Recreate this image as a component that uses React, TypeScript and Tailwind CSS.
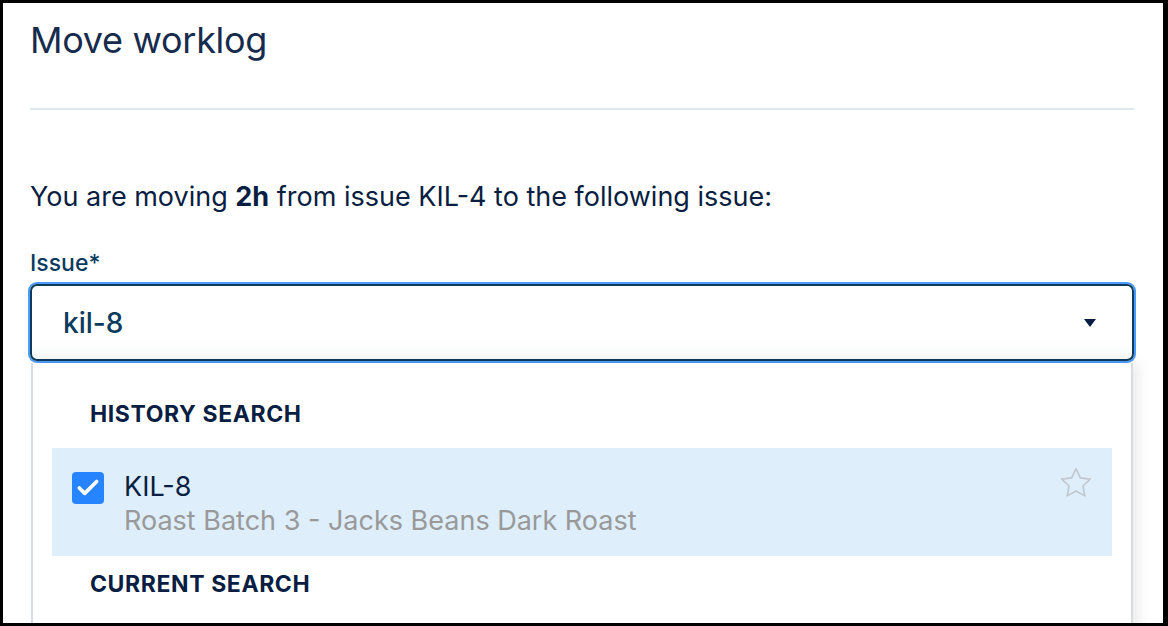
import { Check } from "lucide-react";

function StarIcon() {
  return (
    <svg width="38" height="36" viewBox="0 0 24 24" fill="none" stroke="#c1c7d0" strokeWidth="1.1" strokeLinejoin="round">
      <path d="M12 2.5l2.9 6.1 6.6.8-4.9 4.6 1.3 6.6L12 17.3l-5.9 3.3 1.3-6.6-4.9-4.6 6.6-.8z" />
    </svg>
  );
}

export default function App() {
  return (
    <div
      className="h-[626px] w-[1168px] overflow-hidden bg-black pt-[3px] pb-[3px] pl-[3px] pr-[5px]"
      style={{ fontFamily: "Inter, 'Noto Sans', sans-serif" }}
    >
      <div className="h-full w-full overflow-hidden bg-white pl-[27px] pr-[29px]">
        <h1 className="pt-[15px] text-[36px] leading-[44px] font-normal tracking-[-0.3px] text-[#172b4d]">
          Move worklog
        </h1>
        <div className="mt-[46px] h-[2px] bg-[#dfe8f1]" />

        <p className="mt-[71px] text-[27px] leading-[32px] text-[#091e42]">
          You are moving <span className="font-bold">2h</span> from issue KIL-4 to the following issue:
        </p>

        <div className="mt-[36px] text-[23px] leading-[28px] font-medium text-[#0a3b5e]">Issue*</div>

        <div className="relative mt-[7px]">
          <div className="flex h-[77px] items-center justify-between rounded-[7px] border-2 border-[#0d3b58] bg-[linear-gradient(to_bottom,#ffffff_75%,#f7f8f9)] pl-[31px] pr-[36px] shadow-[0_0_0_2px_#4c9aff]">
            <span className="text-[28px] font-medium text-[#0a3b5e]">kil-8</span>
            <span className="h-0 w-0 border-x-[6px] border-t-[8px] border-x-transparent border-t-[#091e42]" />
          </div>

          <div className="mt-[2px] ml-[1px] mr-[1px] h-[300px] border-x-2 border-[#d7dde3] bg-white shadow-[6px_0_12px_rgba(0,0,0,0.08)]">
            <div className="pt-[37px] pl-[57px] text-[23px] leading-[28px] font-bold tracking-[0.6px] text-[#091e42] uppercase">
              History search
            </div>
            <div className="mt-[20px] mx-[19px] flex h-[108px] items-start bg-[#deeefb] pl-[20px] pr-[17px]">
              <div className="mt-[24px] flex h-[32px] w-[32px] items-center justify-center rounded-[4px] bg-[#2684ff]">
                <Check size={26} strokeWidth={3.4} color="white" />
              </div>
              <div className="ml-[20px] mt-[22px] flex-1">
                <div className="text-[27px] leading-[34px] text-[#091e42]">KIL-8</div>
                <div className="text-[27px] leading-[34px] text-[#999999]">Roast Batch 3 - Jacks Beans Dark Roast</div>
              </div>
              <div className="mt-[17px]">
                <StarIcon />
              </div>
            </div>
            <div className="pt-[14px] pl-[57px] text-[23px] leading-[28px] font-bold tracking-[0.6px] text-[#091e42] uppercase">
              Current search
            </div>
          </div>
        </div>
      </div>
    </div>
  );
}
